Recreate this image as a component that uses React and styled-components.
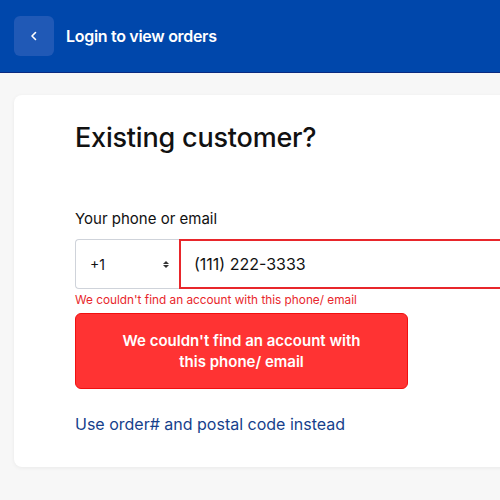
import React from 'react'
import styled, { createGlobalStyle } from 'styled-components'

const Global = createGlobalStyle`
  body {
    margin: 0;
    background: #f7f7f7;
    font-family: Inter, "Noto Sans", sans-serif;
  }
`

const Page = styled.div`
  width: 500px;
  height: 500px;
  overflow: hidden;
  background: #f7f7f7;
`

const Header = styled.header`
  height: 72px;
  background: #0047ab;
  border-bottom: 1.5px solid #0a2a80;
  display: flex;
  align-items: center;
  padding: 0 14px;
  gap: 12px;
`

const BackButton = styled.button`
  width: 40px;
  height: 40px;
  border: none;
  border-radius: 6px;
  background: #2059b6;
  display: flex;
  align-items: center;
  justify-content: center;
  padding: 0;
  svg { display: block; }
`

const Title = styled.h1`
  margin: 0;
  color: #fff;
  font-size: 16px;
  font-weight: 600;
  letter-spacing: -0.3px;
`

const Card = styled.main`
  margin: 22px 0 0 14px;
  width: 520px;
  background: #fff;
  border-radius: 8px;
  box-shadow: 0 1px 4px rgba(0, 0, 0, 0.06);
  padding: 26px 0 33px 61px;
  box-sizing: border-box;
`

const Heading = styled.h2`
  margin: 0 0 55px;
  font-size: 27px;
  font-weight: 500;
  color: #111;
  letter-spacing: -0.2px;
`

const Label = styled.label`
  display: block;
  font-size: 15px;
  color: #111;
  margin-bottom: 11px;
`

const InputRow = styled.div`
  display: flex;
  height: 50px;
`

const CountrySelect = styled.div`
  width: 104px;
  box-sizing: border-box;
  border: 1px solid #cfd3da;
  border-right: none;
  border-radius: 4px 0 0 4px;
  display: flex;
  align-items: center;
  justify-content: space-between;
  padding: 0 10px 0 14px;
  font-size: 14px;
  color: #111;
`

const Arrows = styled.span`
  display: flex;
  flex-direction: column;
  gap: 1px;
  span {
    width: 0;
    height: 0;
    border-left: 3px solid transparent;
    border-right: 3px solid transparent;
  }
  span:first-child { border-bottom: 3px solid #333; }
  span:last-child { border-top: 3px solid #333; }
`

const PhoneInput = styled.div`
  flex: 1;
  border: 2px solid #e8262b;
  display: flex;
  align-items: center;
  padding-left: 13px;
  font-size: 16px;
  color: #111;
`

const ErrorText = styled.p`
  margin: 4px 0 6px;
  font-size: 11.8px;
  color: #e8262b;
`

const ErrorBox = styled.div`
  width: 333px;
  box-sizing: border-box;
  background: #ff3333;
  border: 1px solid #f01010;
  border-radius: 6px;
  padding: 16px 36px;
  color: #fff;
  font-size: 15px;
  font-weight: 600;
  text-align: center;
  line-height: 21px;
`

const AltLink = styled.a`
  display: block;
  margin-top: 25px;
  font-size: 16px;
  color: #163f8c;
  text-decoration: none;
`

export default function App() {
  return (
    <Page>
      <Global />
      <Header>
        <BackButton aria-label="Back">
          <svg width="14" height="14" viewBox="0 0 14 14" fill="none">
            <path d="M8.5 3.5L5 7l3.5 3.5" stroke="#fff" strokeWidth="1.6" strokeLinecap="round" strokeLinejoin="round" />
          </svg>
        </BackButton>
        <Title>Login to view orders</Title>
      </Header>
      <Card>
        <Heading>Existing customer?</Heading>
        <Label>Your phone or email</Label>
        <InputRow>
          <CountrySelect>
            +1
            <Arrows><span /><span /></Arrows>
          </CountrySelect>
          <PhoneInput>(111) 222-3333</PhoneInput>
        </InputRow>
        <ErrorText>We couldn't find an account with this phone/ email</ErrorText>
        <ErrorBox>We couldn't find an account with this phone/ email</ErrorBox>
        <AltLink href="#">Use order# and postal code instead</AltLink>
      </Card>
    </Page>
  )
}
